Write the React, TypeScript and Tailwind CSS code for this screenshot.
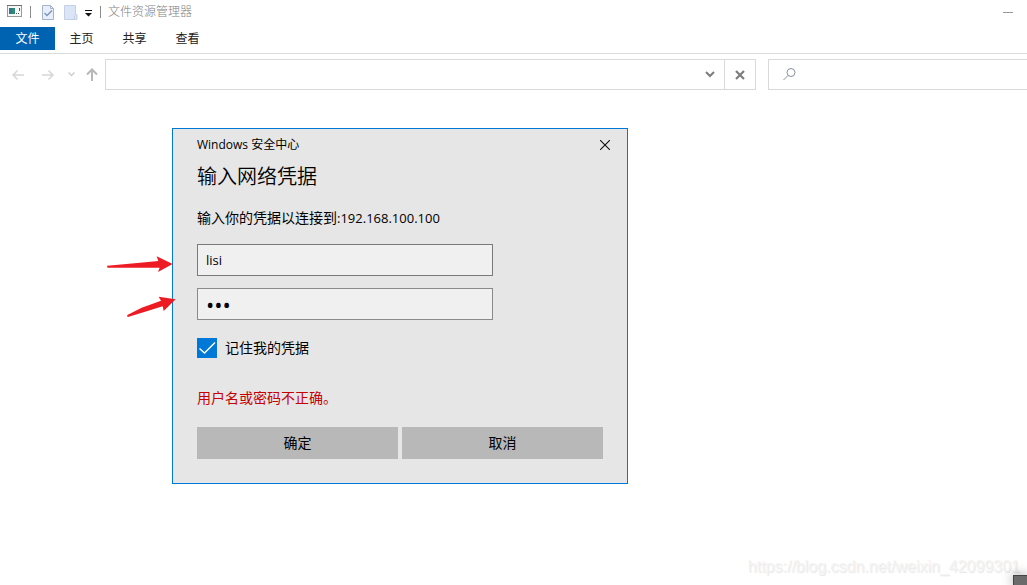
import { useState } from "react";

const tabs = ["主页", "共享", "查看"];

const TitleBar = () => {
    return (
        <div className="flex h-6 items-center pl-[7px] pr-[13px]">
            <svg width="16" height="14" viewBox="0 0 16 14" fill="none">
                <rect x="0.5" y="0.5" width="14" height="11" fill="#f7f7f7" stroke="#9a9a9a" />
                <path d="M0 0.500h15" stroke="#6f6f6f" />
                <path d="M2 3h6v6H2z" fill="#2c8a73" />
                <path d="M2 3h3v6H2z" fill="#3b6f98" />
                <path d="M12.5 3v3M9 8.500h1M11 8.500h1" stroke="#555" />
            </svg>
            <span className="ml-[7px] h-3 w-px bg-[#8c8c8c]" />
            <button type="button" aria-label="属性" className="ml-[11px]">
                <svg width="13" height="17" viewBox="0 0 13 17" fill="none">
                    <path d="M0.5 1.5h8l3 3v11h-11z" fill="#e9effa" stroke="#a3b4d1" />
                    <path d="M8.5 1.5v3h3" stroke="#a3b4d1" />
                    <path d="M2.500 9l2.500 2.500L10 6.500" stroke="#7a94c0" strokeWidth="1.4" />
                </svg>
            </button>
            <button type="button" aria-label="新建文件夹" className="ml-[9px]">
                <svg width="14" height="17" viewBox="0 0 14 17" fill="none">
                    <path d="M0.5 1.5h11v9h1.500v5H0.5z" fill="#dbe5f5" stroke="#c3d0e6" />
                    <path d="M10.500 15.500v-4l1-1" stroke="#c3d0e6" />
                </svg>
            </button>
            <button type="button" aria-label="自定义快速访问工具栏" className="ml-[7px] mt-[3px]">
                <svg width="7" height="7" viewBox="0 0 7 7">
                    <path d="M0 0h7v1H0zM0 3h7L3.5 6.500z" fill="#111" />
                </svg>
            </button>
            <span className="ml-2 h-3 w-px bg-[#8c8c8c]" />
            <h1 className="ml-[7px] text-xs font-light text-[#808080]">文件资源管理器</h1>
            <button type="button" aria-label="最小化" className="ml-auto">
                <svg width="11" height="3" viewBox="0 0 11 3">
                    <path d="M0 1h10v1H0z" fill="#999" />
                </svg>
            </button>
        </div>
    );
};

const NavBar = () => {
    return (
        <div className="flex h-[31px]">
            <div className="mr-[3px] flex items-center">
                <button type="button" aria-label="后退" className="flex w-9 justify-center">
                    <svg width="12" height="12" viewBox="0 0 12 12" fill="none" stroke="#d6d6d6" strokeWidth="1.500">
                        <path d="M12 6H1M5.500 1.500L1 6l4.500 4.500" />
                    </svg>
                </button>
                <button type="button" aria-label="前进" className="flex w-6 justify-center">
                    <svg width="12" height="12" viewBox="0 0 12 12" fill="none" stroke="#d6d6d6" strokeWidth="1.500">
                        <path d="M0 6h11M6.500 1.500L11 6l-4.500 4.500" />
                    </svg>
                </button>
                <button type="button" aria-label="最近浏览的位置" className="flex w-[22px] justify-center">
                    <svg width="7" height="5" viewBox="0 0 7 5" fill="none" stroke="#cfcfcf" strokeWidth="1.500">
                        <path d="M0.500 0.500l3 3 3-3" />
                    </svg>
                </button>
                <button type="button" aria-label="向上" className="flex w-5 justify-center">
                    <svg width="12" height="13" viewBox="0 0 12 13" fill="none" stroke="#b8b8b8" strokeWidth="2">
                        <path d="M6 13V2M1 6.500l5-5 5 5" />
                    </svg>
                </button>
            </div>
            <div className="flex flex-1 border border-[#d9d9d9]">
                <input type="text" aria-label="地址" className="min-w-0 flex-1 px-2 text-xs outline-none" />
                <button type="button" aria-label="展开" className="flex w-7 items-center justify-center">
                    <svg width="10" height="7" viewBox="0 0 10 7" fill="none" stroke="#7d7d7d" strokeWidth="2">
                        <path d="M1 1l4 4 4-4" />
                    </svg>
                </button>
                <button type="button" aria-label="停止" className="flex w-[31px] items-center justify-center border-l border-[#d9d9d9]">
                    <svg width="10" height="10" viewBox="0 0 10 10" fill="none" stroke="#7d7d7d" strokeWidth="2.200">
                        <path d="M1 1l8 8M9 1L1 9" />
                    </svg>
                </button>
            </div>
            <label className="ml-3 flex w-[259px] items-center border border-r-0 border-[#d9d9d9] pl-[14px]">
                <svg width="13" height="13" viewBox="0 0 13 13" fill="none" stroke="#8a8f9c">
                    <circle cx="8" cy="4.500" r="4" />
                    <path d="M5 7.500L0.500 12" />
                </svg>
                <input type="search" aria-label="搜索" className="min-w-0 flex-1 px-2 text-xs outline-none" />
            </label>
        </div>
    );
};

const Arrows = () => {
    return (
        <svg className="absolute -left-[73px] top-[121px]" width="80" height="80" viewBox="0 0 240 240" fill="#ed1c24">
            <path d="M22 47L120 38L175 33L170 19L218 42L174 66L179 53L120 53L23 53Q20 50 22 47Z" />
            <path d="M82 195L125 173L183 152L176 140L227 148L191 183L188 169L140 184L84 201Q80 199 82 195Z" />
        </svg>
    );
};

const Credentials = () => {
    const [user, setUser] = useState("lisi");
    const [password, setPassword] = useState("123");
    const [remember, setRemember] = useState(true);

    return (
        <form
            role="dialog"
            aria-labelledby="heading"
            onSubmit={(e) => e.preventDefault()}
            className="relative ml-[172px] mt-[38px] w-[456px] border border-[#0078d7] bg-[#e6e6e6] px-6 pb-6 text-sm leading-5 text-black"
        >
            <div className="flex h-8 items-center justify-between">
                <span className="text-xs">Windows 安全中心</span>
                <button type="button" aria-label="关闭" className="-mr-6 flex h-8 w-11 items-center justify-center">
                    <svg width="10" height="10" viewBox="0 0 10 10" fill="none" stroke="#111" strokeWidth="1.100">
                        <path d="M0 0l10 10M10 0L0 10" />
                    </svg>
                </button>
            </div>
            <h2 id="heading" className="text-xl font-[350] leading-8">输入网络凭据</h2>
            <p className="mt-[15px]">
                输入你的凭据以连接到<span className="text-[13px]">:192.168.100.100</span>
            </p>
            <div className="mt-4 flex w-[296px] flex-col gap-3">
                <input
                    type="text"
                    aria-label="用户名"
                    value={user}
                    onChange={(e) => setUser(e.target.value)}
                    className="h-8 border border-[#7a7a7a] bg-[#f0f0f0] px-2 text-[13px] outline-none"
                />
                <input
                    type="password"
                    aria-label="密码"
                    value={password}
                    onChange={(e) => setPassword(e.target.value)}
                    className="h-8 border border-[#8a8a8a] bg-[#f0f0f0] px-2 text-[22px] outline-none"
                />
            </div>
            <label className="relative mt-[18px] flex items-center gap-2">
                <input
                    type="checkbox"
                    checked={remember}
                    onChange={(e) => setRemember(e.target.checked)}
                    className="size-5 appearance-none border border-[#0078d7] checked:bg-[#0078d7]"
                />
                {remember && (
                    <svg className="absolute left-0 top-0" width="20" height="20" viewBox="0 0 20 20" fill="none" stroke="#fff" strokeWidth="1.400">
                        <path d="M2.500 10.500l5 4.500L18 4.500" />
                    </svg>
                )}
                记住我的凭据
            </label>
            <p className="mt-[30px] text-[#c50000]">用户名或密码不正确。</p>
            <div className="mt-[19px] grid grid-cols-2 gap-1">
                <button type="submit" className="h-8 bg-[#b8b8b8]">确定</button>
                <button type="button" className="h-8 bg-[#b8b8b8]">取消</button>
            </div>
            <Arrows />
        </form>
    );
};

const App = () => {
    return (
        <div className="relative flex min-h-screen flex-col overflow-hidden bg-white font-['Open_Sans','Noto_Sans_CJK_SC',sans-serif]">
            <header>
                <TitleBar />
                <nav className="flex border-b border-[#dadbdc] py-[3px] text-xs text-[#222]">
                    <button type="button" className="h-[23px] w-[55px] bg-[#0063b1] text-white">文件</button>
                    {tabs.map((tab) => (
                        <button type="button" key={tab} className="h-[23px] w-[53px]">{tab}</button>
                    ))}
                </nav>
                <div className="pt-[5px]">
                    <NavBar />
                </div>
            </header>
            <main className="flex-1">
                <Credentials />
            </main>
            <footer className="pb-2 pr-[7px] text-right font-['Liberation_Sans',sans-serif] text-base leading-5 text-[#f4f4f4] [text-shadow:1px_1px_1px_#e6e6e6]">
                https://blog.csdn.net/weixin_42099301
            </footer>
            <span className="absolute bottom-0 right-0 h-[10px] w-[14px] border-l border-t border-[#444] bg-[#6b6b6b] shadow-[0_0_12px_#00000066]" />
        </div>
    );
};

export default App;
